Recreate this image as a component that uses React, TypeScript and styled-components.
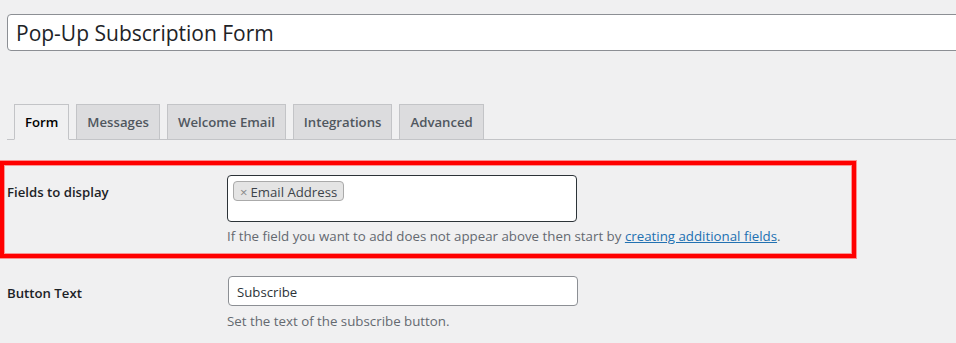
import React from "react";
import styled, { createGlobalStyle } from "styled-components";

const Global = createGlobalStyle`
  html, body {
    margin: 0;
    padding: 0;
    background: #f0f0f1;
    overflow: hidden;
  }
  body {
    font-family: "Open Sans", "Noto Sans", sans-serif;
    font-size: 13px;
    color: #1d2327;
  }
`;

const Page = styled.div`
  width: 956px;
  height: 343px;
  padding: 14px 0 0 7px;
  box-sizing: border-box;
  overflow: hidden;
`;

const TitleInput = styled.input`
  display: block;
  box-sizing: border-box;
  width: 980px;
  height: 37px;
  margin: 0;
  padding: 0 8px;
  border: 1px solid #8c8f94;
  border-radius: 4px;
  background: #fff;
  font-family: "Open Sans", "Noto Sans", sans-serif;
  font-size: 21px;
  color: #1d2327;
  outline: none;
`;

const TabBar = styled.nav`
  display: flex;
  align-items: flex-end;
  margin-top: 54px;
  padding-left: 7px;
  border-bottom: 1px solid #c3c4c7;
  height: 35px;
  box-sizing: border-box;
`;

const Tab = styled.a<{ $active?: boolean }>`
  display: block;
  box-sizing: border-box;
  height: 36px;
  margin: 0 7px -1px 0;
  padding: 5px 10px;
  border: 1px solid #c3c4c7;
  border-bottom-color: ${(p) => (p.$active ? "#f0f0f1" : "#c3c4c7")};
  background: ${(p) => (p.$active ? "#f0f0f1" : "#dcdcde")};
  color: ${(p) => (p.$active ? "#000" : "#50575e")};
  font-size: 13.2px;
  font-weight: 600;
  line-height: 24px;
  text-decoration: none;
  white-space: nowrap;
`;

const FieldRow = styled.div<{ $highlight?: boolean }>`
  display: grid;
  grid-template-columns: 220px 1fr;
  ${(p) =>
    p.$highlight
      ? `
    width: 856px;
    box-sizing: border-box;
    margin: 21px 0 0 -7px;
    padding: 0 0 8px 3px;
    border: 4px solid #ff0000;
    box-shadow: 0 0 0 1px rgba(255, 80, 80, 0.6), inset 0 0 0 1px rgba(255, 60, 60, 0.5);
  `
      : `
    padding: 0;
  `}
`;

const Label = styled.div<{ $top: number }>`
  padding-top: ${(p) => p.$top}px;
  font-size: 13.2px;
  font-weight: 600;
  line-height: 20px;
  color: #1d2327;
`;

const Control = styled.div<{ $top: number }>`
  padding-top: ${(p) => p.$top}px;
`;

const TagBox = styled.div`
  box-sizing: border-box;
  width: 350px;
  height: 47px;
  padding: 5px;
  border: 1px solid #2c3338;
  border-radius: 4px;
  background: #fff;
  display: flex;
  align-items: flex-start;
`;

const Chip = styled.span`
  display: inline-flex;
  align-items: center;
  box-sizing: border-box;
  height: 20px;
  padding: 1px 6px 0 6px;
  border: 1px solid #aaa;
  border-radius: 4px;
  background: #e4e4e4;
  color: #3c434a;
  font-size: 13.2px;
  line-height: 18px;
`;

const ChipRemove = styled.span`
  color: #888;
  font-size: 13px;
  margin-right: 3px;
`;

const TextInput = styled.input`
  display: block;
  box-sizing: border-box;
  width: 350px;
  height: 30px;
  margin: 0 0 0 1px;
  padding: 1px 8px 0;
  border: 1px solid #8c8f94;
  border-radius: 4px;
  background: #fff;
  font-family: "Open Sans", "Noto Sans", sans-serif;
  font-size: 13.2px;
  color: #2c3338;
  outline: none;
`;

const Help = styled.p<{ $gap?: number }>`
  margin: ${(p) => p.$gap ?? 4}px 0 0;
  font-size: 13.3px;
  line-height: 20px;
  color: #646970;
  white-space: nowrap;
`;

const HelpLink = styled.a`
  color: #2271b1;
  text-decoration: underline;
`;

const tabs = ["Form", "Messages", "Welcome Email", "Integrations", "Advanced"];

export default function App() {
  return (
    <>
      <Global />
      <Page>
        <TitleInput defaultValue="Pop-Up Subscription Form" />
        <TabBar>
          {tabs.map((t, i) => (
            <Tab key={t} href="#" $active={i === 0}>
              {t}
            </Tab>
          ))}
        </TabBar>
        <FieldRow $highlight>
          <Label $top={17}>Fields to display</Label>
          <Control $top={10}>
            <TagBox>
              <Chip>
                <ChipRemove>×</ChipRemove>Email Address
              </Chip>
            </TagBox>
            <Help>
              If the field you want to add does not appear above then start by{" "}
              <HelpLink href="#">creating additional fields</HelpLink>.
            </Help>
          </Control>
        </FieldRow>
        <FieldRow>
          <Label $top={25}>Button Text</Label>
          <Control $top={18}>
            <TextInput defaultValue="Subscribe" />
            <Help $gap={5}>Set the text of the subscribe button.</Help>
          </Control>
        </FieldRow>
      </Page>
    </>
  );
}
